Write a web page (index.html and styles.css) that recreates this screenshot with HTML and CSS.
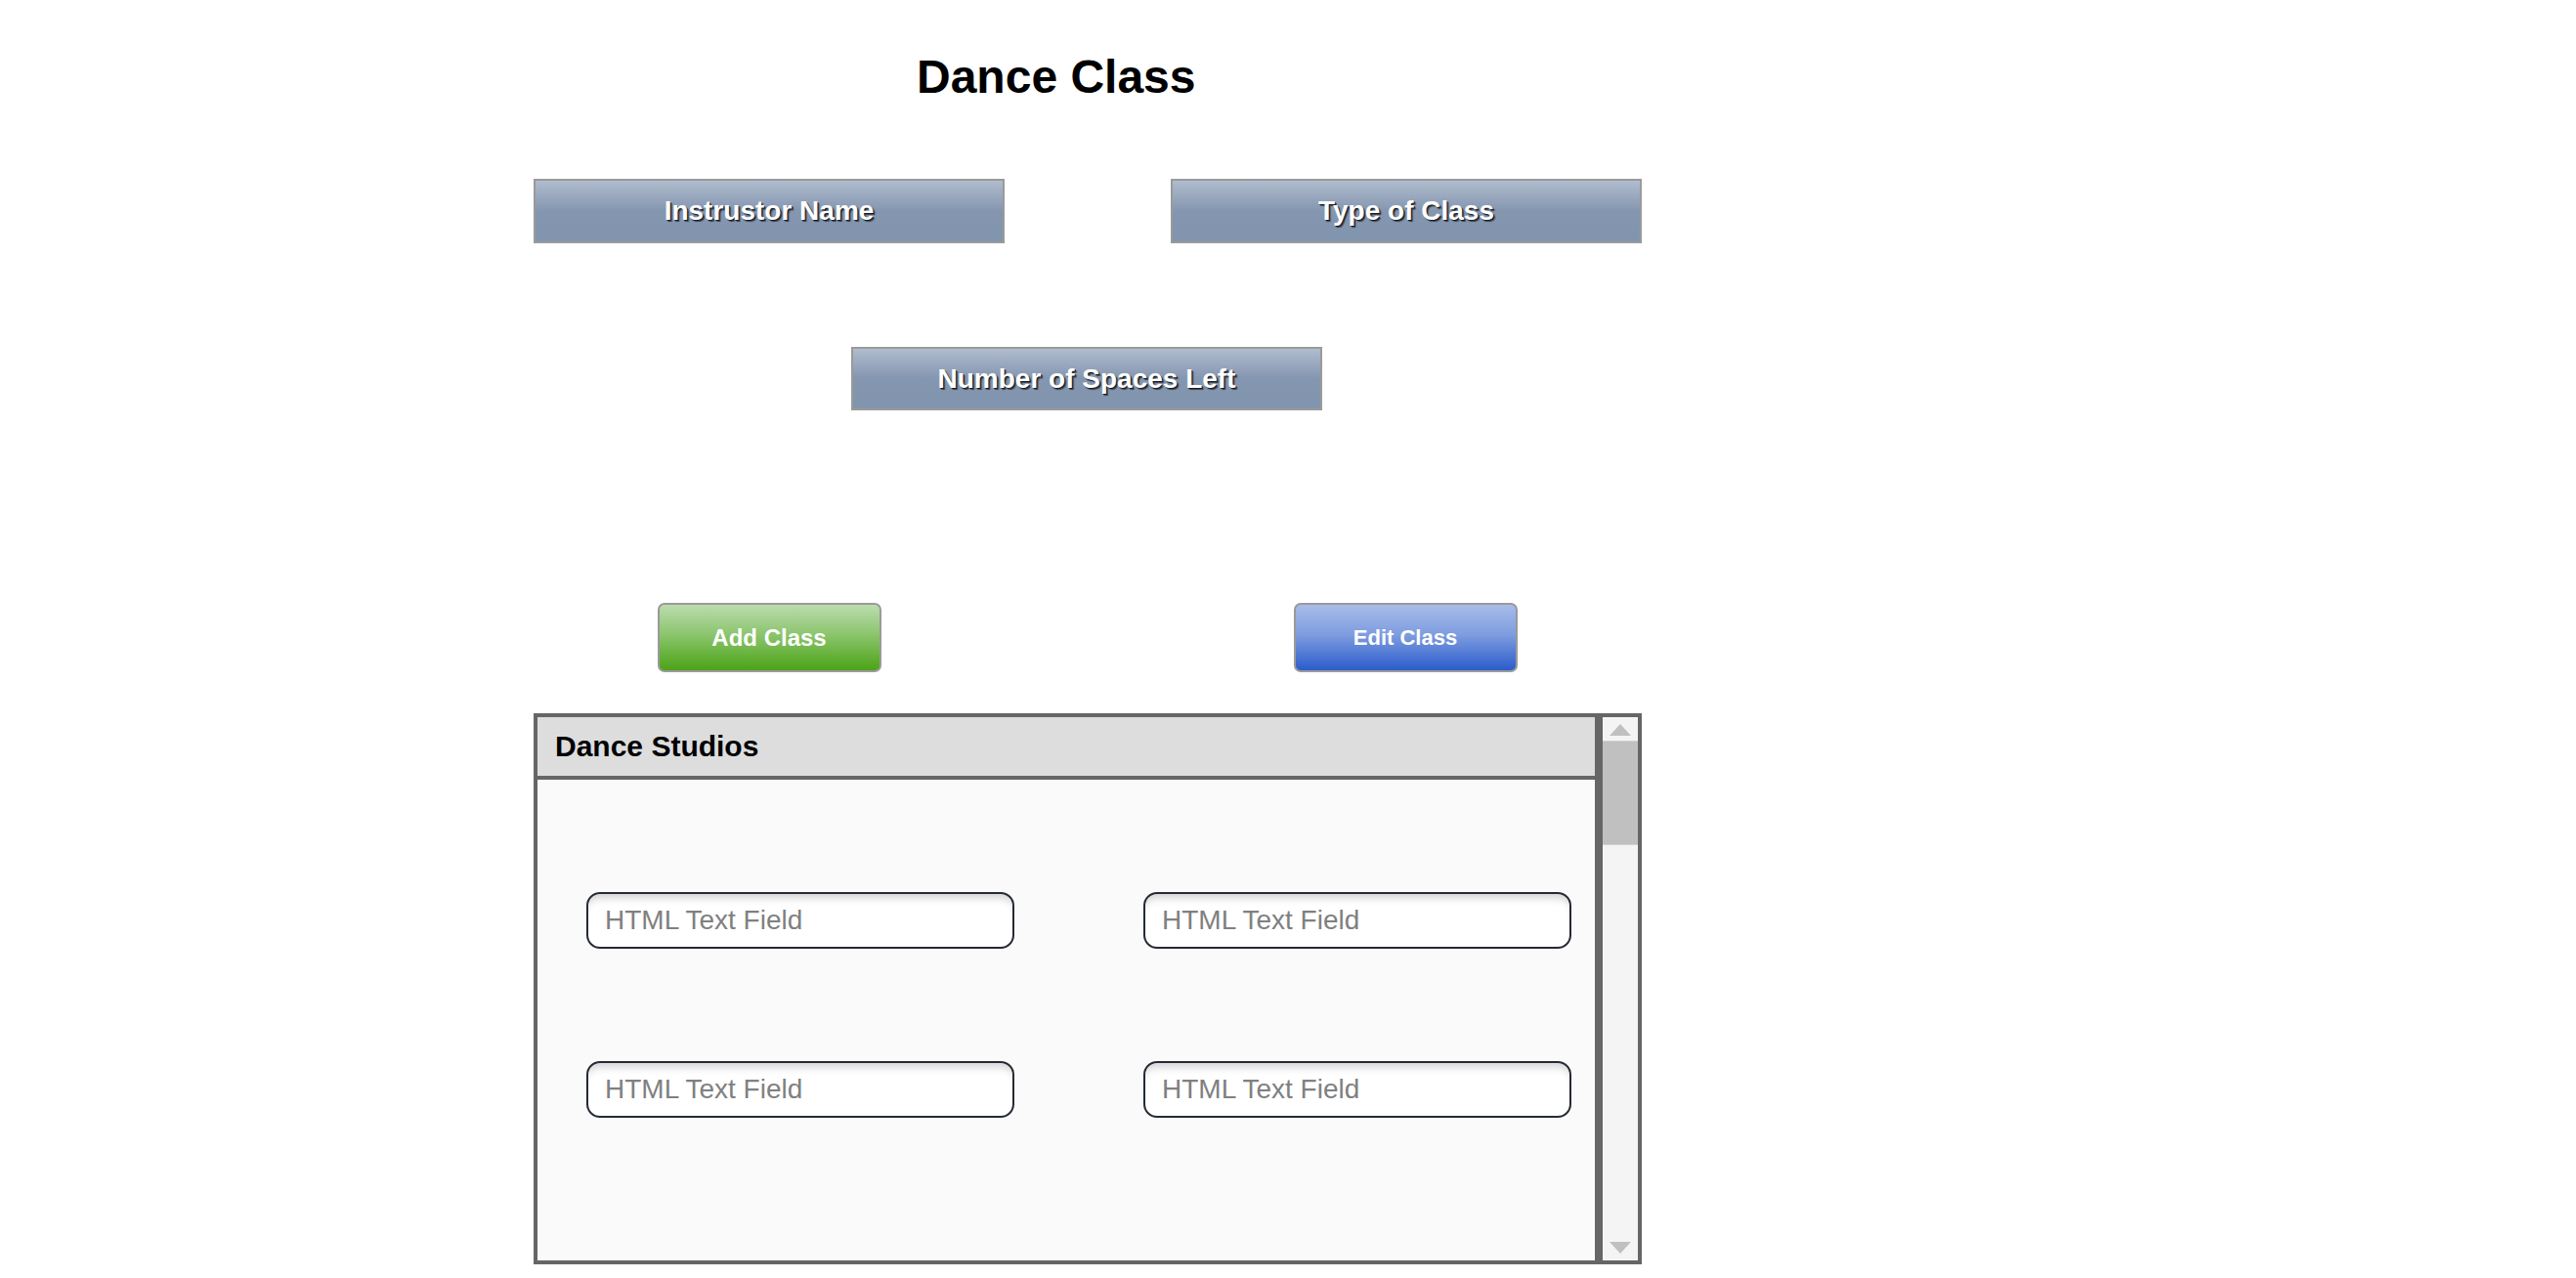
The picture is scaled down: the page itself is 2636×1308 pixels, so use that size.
FILE: index.html
```html
<!DOCTYPE html>
<html lang="en">
<head>
<meta charset="utf-8">
<title>Dance Class</title>
<link rel="stylesheet" href="styles.css">
</head>
<body>
<main class="page">
  <h1 class="title">Dance Class</h1>

  <div class="row-pair">
    <div class="label-box">Instrustor Name</div>
    <div class="label-box">Type of Class</div>
  </div>

  <div class="row-single">
    <div class="label-box">Number of Spaces Left</div>
  </div>

  <div class="row-buttons">
    <div class="btn-cell"><button class="btn btn-green" type="button">Add Class</button></div>
    <div class="btn-cell"><button class="btn btn-blue" type="button">Edit Class</button></div>
  </div>

  <section class="panel">
    <div class="list">
      <div class="list-head">Dance Studios</div>
      <div class="list-body">
        <input class="field" type="text" placeholder="HTML Text Field">
        <input class="field" type="text" placeholder="HTML Text Field">
        <input class="field" type="text" placeholder="HTML Text Field">
        <input class="field" type="text" placeholder="HTML Text Field">
      </div>
    </div>
    <div class="scroll">
      <div class="scroll-up"><span class="tri-up"></span></div>
      <div class="scroll-thumb"></div>
      <div class="scroll-track"></div>
      <div class="scroll-down"><span class="tri-down"></span></div>
    </div>
  </section>
</main>
</body>
</html>
```

FILE: styles.css
```css
html, body {
  margin: 0;
  padding: 0;
  background: #ffffff;
}

body {
  font-family: "Liberation Sans", Arial, sans-serif;
  color: #000;
}

.page {
  width: 1134px;
  margin-left: 546px;
  padding-top: 51px;
}

.title {
  margin: 0 0 0 392px;
  font-size: 48px;
  line-height: 56px;
  font-weight: bold;
}

.row-pair {
  display: flex;
  justify-content: space-between;
  margin-top: 76px;
}

.label-box {
  box-sizing: border-box;
  width: 482px;
  height: 66px;
  border: 2px solid #9a9a9a;
  background: linear-gradient(#b0bccd 0%, #96a5bc 30%, #8496b0 50%, #8194ad 100%);
  color: #ffffff;
  font-weight: bold;
  font-size: 28px;
  display: flex;
  align-items: center;
  justify-content: center;
  text-shadow: 1px 1px 0 rgba(20, 24, 32, 0.95), 2px 2px 1px rgba(30, 34, 42, 0.7);
}

.row-single {
  display: flex;
  margin-top: 106px;
  padding-left: 325px;
}

.row-single .label-box {
  height: 65px;
}

.row-buttons {
  display: flex;
  justify-content: space-between;
  margin-top: 197px;
}

.btn-cell {
  width: 482px;
  display: flex;
  justify-content: center;
}

.btn-cell + .btn-cell {
  padding-right: 2px;
  box-sizing: border-box;
}

.btn {
  box-sizing: border-box;
  width: 229px;
  height: 71px;
  border: 2px solid #9a9a9a;
  border-radius: 7px;
  color: #ffffff;
  font-family: "Liberation Sans", Arial, sans-serif;
  font-weight: bold;
  padding: 0;
  cursor: pointer;
}

.btn-green {
  font-size: 24px;
  background: linear-gradient(#bcdcae 0%, #8cc56e 45%, #4ca316 100%);
}

.btn-blue {
  font-size: 22px;
  background: linear-gradient(#a7bce9 0%, #7f9ddf 45%, #2b5ccc 100%);
}

.panel {
  box-sizing: border-box;
  display: flex;
  width: 1134px;
  height: 564px;
  margin-top: 42px;
  border: 4px solid #666666;
}

.list {
  flex: 1;
  display: flex;
  flex-direction: column;
  background: #fafafa;
  border-right: 8px solid #666666;
}

.list-head {
  height: 60px;
  background: #dddddd;
  border-bottom: 4px solid #666666;
  display: flex;
  align-items: center;
  padding-left: 18px;
  font-size: 30px;
  font-weight: bold;
}

.list-body {
  display: grid;
  grid-template-columns: 438px 438px;
  column-gap: 132px;
  row-gap: 115px;
  padding: 115px 0 0 50px;
}

.field {
  box-sizing: border-box;
  width: 438px;
  height: 58px;
  margin: 0;
  border: 2px solid #252a33;
  border-radius: 14px;
  background: #ffffff;
  box-shadow: inset 0 9px 8px -5px rgba(0, 0, 0, 0.18);
  padding: 0 0 0 17px;
  font-family: "Liberation Sans", Arial, sans-serif;
  font-size: 28px;
  color: #333;
  outline: none;
}

.field::placeholder {
  color: #808080;
  opacity: 1;
}

.scroll {
  width: 36px;
  display: flex;
  flex-direction: column;
  background: #f4f4f4;
}

.scroll-up {
  height: 24px;
  display: flex;
  justify-content: center;
  padding-top: 7px;
  box-sizing: border-box;
}

.scroll-down {
  height: 24px;
  display: flex;
  justify-content: center;
  align-items: flex-end;
  padding-bottom: 7px;
  box-sizing: border-box;
}

.tri-up {
  width: 0;
  height: 0;
  border-left: 11px solid transparent;
  border-right: 11px solid transparent;
  border-bottom: 12px solid #c0c0c0;
}

.tri-down {
  width: 0;
  height: 0;
  border-left: 11px solid transparent;
  border-right: 11px solid transparent;
  border-top: 12px solid #c0c0c0;
}

.scroll-thumb {
  height: 105px;
  background: #c0c0c0;
  border-top: 1px solid #d0d0d0;
  border-bottom: 1px solid #d0d0d0;
}

.scroll-track {
  flex: 1;
}
```
